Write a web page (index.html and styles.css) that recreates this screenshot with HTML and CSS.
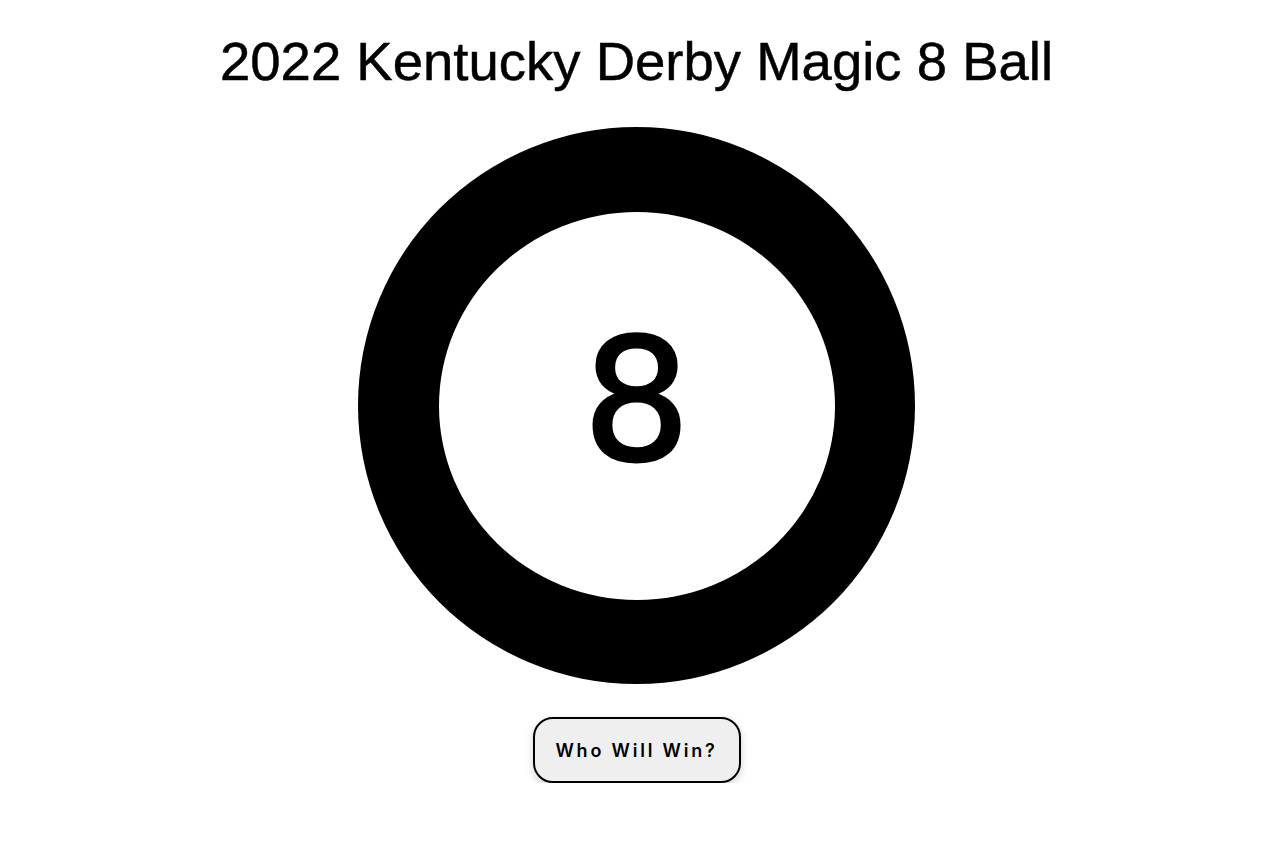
FILE: index.html
```html
<!DOCTYPE html>
<html lang="en">
<head>
<meta charset="utf-8">
<title>2022 Kentucky Derby Magic 8 Ball</title>
<link rel="stylesheet" href="styles.css">
</head>
<body>
<main class="page">
  <h1 class="title">2022 Kentucky Derby Magic 8 Ball</h1>
  <div class="ball">
    <div class="window">
      <span class="eight">8</span>
    </div>
  </div>
  <button class="ask" type="button">Who Will Win?</button>
</main>
</body>
</html>
```

FILE: styles.css
```css
html, body {
  margin: 0;
  padding: 0;
  background: #ffffff;
}

.page {
  display: flex;
  flex-direction: column;
  align-items: center;
  padding-top: 29px;
  padding-right: 7px;
}

.title {
  margin: 0;
  font-family: "Liberation Sans", Arial, sans-serif;
  font-weight: 400;
  font-size: 54.5px;
  line-height: 65px;
  color: #000;
  -webkit-text-stroke: 0.5px #000;
}

.ball {
  margin-top: 33px;
  width: 557px;
  height: 557px;
  border-radius: 50%;
  background: #000;
  display: flex;
  align-items: center;
  justify-content: center;
}

.window {
  width: 396px;
  height: 388px;
  border-radius: 50%;
  background: #fff;
  display: flex;
  align-items: center;
  justify-content: center;
}

.eight {
  font-family: "DejaVu Sans", sans-serif;
  font-weight: 400;
  font-size: 170px;
  line-height: 1;
  color: #000;
  -webkit-text-stroke: 3px #000;
  transform: translateY(-5px);
}

.ask {
  margin-top: 33px;
  width: 208px;
  height: 66px;
  border: 2.5px solid #000;
  border-radius: 20px;
  background: #efefef;
  box-shadow: 0 3px 8px rgba(0, 0, 0, 0.18);
  font-family: Inter, "Liberation Sans", sans-serif;
  font-weight: 600;
  font-size: 18px;
  letter-spacing: 2.8px;
  color: #000;
  cursor: pointer;
}
```
